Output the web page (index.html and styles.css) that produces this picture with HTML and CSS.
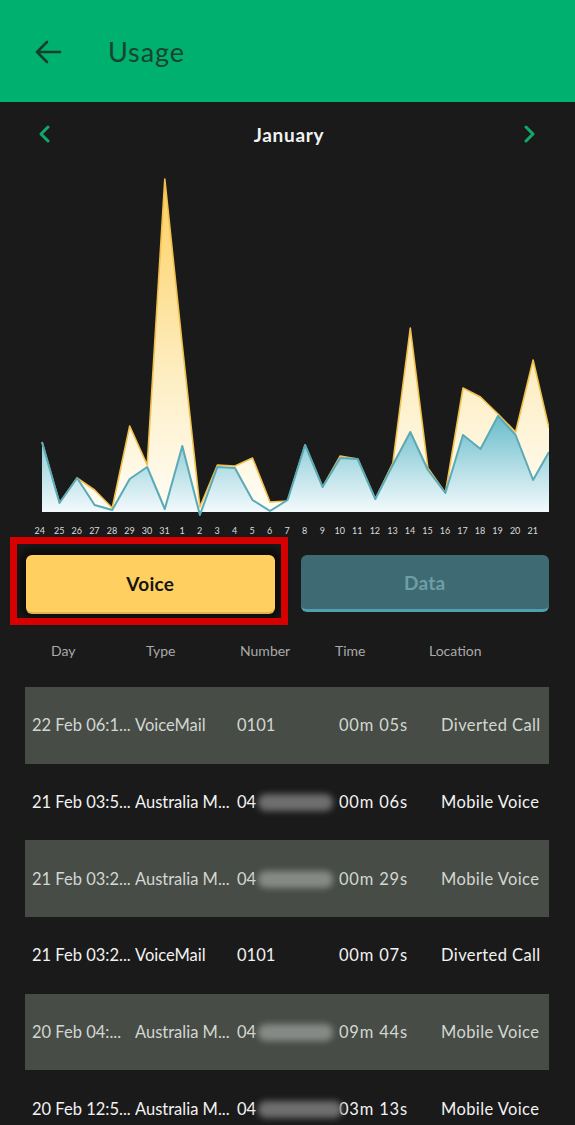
FILE: index.html
```html
<!DOCTYPE html>
<html lang="en">
<head>
  <meta charset="UTF-8">
  <meta name="viewport" content="width=device-width, initial-scale=1.0">
  <title>Usage</title>
  <link rel="stylesheet" href="styles.css">
</head>
<body>

  <header class="top-bar">
    <svg class="back-icon" width="28" height="24" viewBox="0 0 28 24">
      <path d="M26 12H3M13 2L3 12l10 10" fill="none" stroke="#173d2b" stroke-width="2.6" stroke-linecap="round" stroke-linejoin="round"/>
    </svg>
    <h1 class="title">Usage</h1>
  </header>

  <div class="month-nav">
    <svg width="12" height="18" viewBox="0 0 12 18"><path d="M10 2L3 9l7 7" fill="none" stroke="#12a86a" stroke-width="3" stroke-linecap="round" stroke-linejoin="round"/></svg>
    <span class="month">January</span>
    <svg width="12" height="18" viewBox="0 0 12 18"><path d="M2 2l7 7-7 7" fill="none" stroke="#12a86a" stroke-width="3" stroke-linecap="round" stroke-linejoin="round"/></svg>
  </div>

  <!-- usage chart: yellow = total, blue = voice -->
  <div class="chart">
    <svg width="508" height="352" viewBox="0 0 508 352">
      <defs>
        <linearGradient id="gYellow" x1="0" y1="0" x2="0" y2="1">
          <stop offset="0" stop-color="#ffcf5c"/>
          <stop offset="0.6" stop-color="#fdeec4"/>
          <stop offset="1" stop-color="#fffdf6"/>
        </linearGradient>
        <linearGradient id="gBlue" x1="0" y1="0" x2="0" y2="1">
          <stop offset="0" stop-color="#69bccb"/>
          <stop offset="1" stop-color="#f3fafc"/>
        </linearGradient>
      </defs>
      <polygon fill="url(#gYellow)" points="1,347 1,277 18.5,338 36.1,313 53.6,325 71.2,343 88.7,261 106.2,300 123.8,14 141.3,180 158.9,342 176.4,300 193.9,301 211.5,293 229,337 246.6,336 264.1,280 281.6,322 299.2,291 316.7,294 334.3,334 351.8,298 369.3,163 386.9,303 404.4,328 422,223 439.5,232 457,249 474.6,267 492.1,195 508,263 508,347"/>
      <polyline fill="none" stroke="#f0c04c" stroke-width="1.6" stroke-linejoin="round" points="1,277 18.5,338 36.1,313 53.6,325 71.2,343 88.7,261 106.2,300 123.8,14 141.3,180 158.9,342 176.4,300 193.9,301 211.5,293 229,337 246.6,336 264.1,280 281.6,322 299.2,291 316.7,294 334.3,334 351.8,298 369.3,163 386.9,303 404.4,328 422,223 439.5,232 457,249 474.6,267 492.1,195 508,263"/>
      <polygon fill="url(#gBlue)" points="1,347 1,277 18.5,338 36.1,313 53.6,340 71.2,345 88.7,314 106.2,302 123.8,344 141.3,281 158.9,347 176.4,302 193.9,303 211.5,335 229,346 246.6,335 264.1,280 281.6,322 299.2,293 316.7,294 334.3,334 351.8,300 369.3,267 386.9,305 404.4,328 422,270 439.5,284 457,251 474.6,270 492.1,315 508,287 508,347"/>
      <polyline fill="none" stroke="#5aa9b6" stroke-width="2" stroke-linejoin="round" points="1,277 18.5,338 36.1,313 53.6,340 71.2,345 88.7,314 106.2,302 123.8,344 141.3,281 158.9,350 176.4,302 193.9,303 211.5,335 229,346 246.6,335 264.1,280 281.6,322 299.2,293 316.7,294 334.3,334 351.8,300 369.3,267 386.9,305 404.4,328 422,270 439.5,284 457,251 474.6,270 492.1,315 508,287"/>
    </svg>
  </div>

  <div class="axis">
    <span>24</span><span>25</span><span>26</span><span>27</span><span>28</span><span>29</span><span>30</span><span>31</span>
    <span>1</span><span>2</span><span>3</span><span>4</span><span>5</span><span>6</span><span>7</span><span>8</span>
    <span>9</span><span>10</span><span>11</span><span>12</span><span>13</span><span>14</span><span>15</span><span>16</span>
    <span>17</span><span>18</span><span>19</span><span>20</span><span>21</span>
  </div>

  <div class="tabs">
    <button class="tab tab-voice">Voice<span class="highlight"></span></button>
    <button class="tab tab-data">Data</button>
  </div>

  <div class="col-head">
    <span>Day</span><span>Type</span><span>Number</span><span>Time</span><span>Location</span>
  </div>

  <div class="rows">
    <div class="row shaded">
      <span>22 Feb 06:1...</span><span>VoiceMail</span><span>0101</span><span class="time">00m 05s</span><span>Diverted Call</span>
    </div>
    <div class="row">
      <span>21 Feb 03:5...</span><span>Australia M...</span><span class="num">04<i class="blur"></i></span><span class="time">00m 06s</span><span>Mobile Voice</span>
    </div>
    <div class="row shaded">
      <span>21 Feb 03:2...</span><span>Australia M...</span><span class="num">04<i class="blur"></i></span><span class="time">00m 29s</span><span>Mobile Voice</span>
    </div>
    <div class="row">
      <span>21 Feb 03:2...</span><span>VoiceMail</span><span>0101</span><span class="time">00m 07s</span><span>Diverted Call</span>
    </div>
    <div class="row shaded">
      <span>20 Feb 04:...</span><span>Australia M...</span><span class="num">04<i class="blur"></i></span><span class="time">09m 44s</span><span>Mobile Voice</span>
    </div>
    <div class="row">
      <span>20 Feb 12:5...</span><span>Australia M...</span><span class="num">04<i class="blur wide"></i></span><span class="time">03m 13s</span><span>Mobile Voice</span>
    </div>
  </div>

</body>
</html>
```

FILE: styles.css
```css
* {
  box-sizing: border-box;
}

body {
  margin: 0;
  background-color: #1a1a1a;
  font-family: "Lato", "Noto Sans", sans-serif;
  color: #f0f0f0;
  overflow: hidden;
}

.top-bar {
  height: 102px;
  background-color: #00b06e;
  display: flex;
  align-items: center;
  padding-left: 34px;
}

.back-icon {
  margin-top: 2px;
}

.title {
  margin: 0 0 0 46px;
  font-size: 27px;
  font-weight: 400;
  color: #1a4430;
  letter-spacing: 0.9px;
}

.month-nav {
  height: 32px;
  margin-top: 16px;
  display: flex;
  align-items: center;
  justify-content: space-between;
  padding: 0 39px 0 38px;
}

.month {
  font-size: 19px;
  font-weight: 700;
  color: #f2f2f2;
  letter-spacing: 0.7px;
  margin-left: 4px;
}

.chart {
  height: 352px;
  padding-left: 41px;
  margin-top: 15px;
}

.chart svg {
  display: block;
}

.axis {
  display: flex;
  margin: 6px 0 0 33px;
  width: 516px;
  overflow: hidden;
  height: 16px;
  font-size: 9px;
  color: #dcdcdc;
}

.axis span {
  flex: 0 0 17.54px;
  text-align: center;
  line-height: 16px;
}

.axis span:first-child {
  text-indent: -4px;
}

.tabs {
  display: flex;
  gap: 26px;
  padding: 0 26px;
  margin-top: 16px;
}

.tab {
  position: relative;
  flex: 1;
  height: 57px;
  border: none;
  border-radius: 6px;
  font-family: inherit;
  font-size: 19px;
  font-weight: 700;
  letter-spacing: 0.3px;
}

.tab-voice {
  background-color: #ffd05f;
  color: #151515;
  box-shadow: 0 2px 0 #e2b34a, 0 0 6px 7px #0d0d0d;
}

.tab-data {
  background-color: #3e6a73;
  color: #6e9ea7;
  border-bottom: 3px solid #4f9fad;
}

/* red annotation box round the active tab */
.highlight {
  position: absolute;
  left: -16px;
  top: -18px;
  right: -13px;
  bottom: -13px;
  border: 7px solid #d60000;
  pointer-events: none;
}

.col-head {
  display: grid;
  grid-template-columns: 95px 94px 95px 94px 1fr;
  padding-left: 51px;
  margin-top: 29px;
  height: 20px;
  font-size: 14px;
  color: #a9a9a9;
  line-height: 20px;
}

.rows {
  margin: 26px 26px 0 25px;
}

.row {
  display: grid;
  grid-template-columns: 103px 102px 102px 102px 1fr;
  align-items: center;
  height: 76.7px;
  padding-left: 7px;
  font-size: 16.5px;
  white-space: nowrap;
  color: #f2f2f2;
}

.row span {
  overflow: hidden;
}

.row span:last-child {
  letter-spacing: 0.4px;
}

.row .time {
  letter-spacing: 0.8px;
}

.row .num {
  overflow: visible;
}

.shaded {
  background-color: #474c47;
  color: #d3d7d1;
}

.blur {
  display: inline-block;
  width: 75px;
  height: 17px;
  margin-left: 2px;
  vertical-align: -3px;
  border-radius: 8px;
  background-color: #6e6e6e;
  filter: blur(3px);
}

.shaded .blur {
  background-color: #868a86;
}

.blur.wide {
  width: 84px;
}
```
